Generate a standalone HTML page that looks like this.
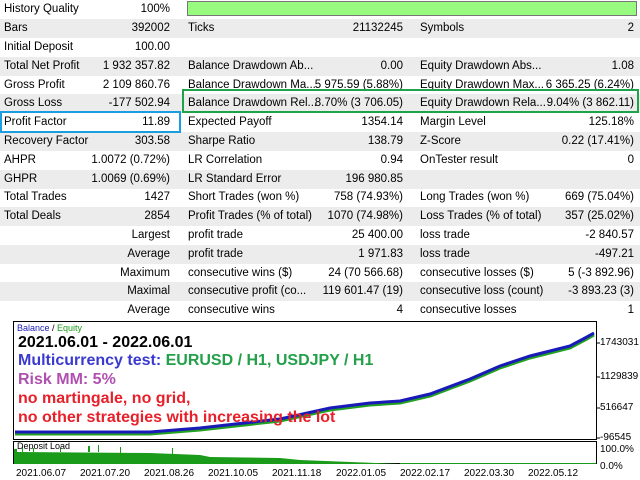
<!DOCTYPE html>
<html><head><style>
body{margin:0;width:640px;height:480px;overflow:hidden;background:#fff;font-family:"Liberation Sans",sans-serif;font-size:11.5px;color:#000;position:relative}
.r{position:absolute;left:0;width:640px;height:19px;line-height:19px}
.g{background:#ececec}
.r span{position:absolute;white-space:nowrap}
.l1{left:4px}.v1{right:470px}.l2{left:188px}.v2{right:237px}.l3{left:420px}.v3{right:6px}
.ax{position:absolute;font-size:10px;white-space:nowrap}
</style></head><body>
<div class="r" style="top:0"><span class="l1">History Quality</span><span class="v1">100%</span></div>
<div style="position:absolute;left:187px;top:1px;width:448px;height:13px;background:#98fb80;border:1px solid #777"></div>
<div class="r g" style="top:19px"><span class="l1">Bars</span><span class="v1">392002</span><span class="l2">Ticks</span><span class="v2">21132245</span><span class="l3">Symbols</span><span class="v3">2</span></div>
<div class="r" style="top:38px"><span class="l1">Initial Deposit</span><span class="v1">100.00</span></div>
<div class="r g" style="top:57px"><span class="l1">Total Net Profit</span><span class="v1">1 932 357.82</span><span class="l2">Balance Drawdown Ab...</span><span class="v2">0.00</span><span class="l3">Equity Drawdown Abs...</span><span class="v3">1.08</span></div>
<div class="r" style="top:76px"><span class="l1">Gross Profit</span><span class="v1">2 109 860.76</span><span class="l2">Balance Drawdown Ma...</span><span class="v2">5 975.59 (5.88%)</span><span class="l3">Equity Drawdown Max...</span><span class="v3">6 365.25 (6.24%)</span></div>
<div class="r g" style="top:94px"><span class="l1">Gross Loss</span><span class="v1">-177 502.94</span><span class="l2">Balance Drawdown Rel...</span><span class="v2">8.70% (3 706.05)</span><span class="l3">Equity Drawdown Rela...</span><span class="v3">9.04% (3 862.11)</span></div>
<div class="r" style="top:113px"><span class="l1">Profit Factor</span><span class="v1">11.89</span><span class="l2">Expected Payoff</span><span class="v2">1354.14</span><span class="l3">Margin Level</span><span class="v3">125.18%</span></div>
<div class="r g" style="top:132px"><span class="l1">Recovery Factor</span><span class="v1">303.58</span><span class="l2">Sharpe Ratio</span><span class="v2">138.79</span><span class="l3">Z-Score</span><span class="v3">0.22 (17.41%)</span></div>
<div class="r" style="top:151px"><span class="l1">AHPR</span><span class="v1">1.0072 (0.72%)</span><span class="l2">LR Correlation</span><span class="v2">0.94</span><span class="l3">OnTester result</span><span class="v3">0</span></div>
<div class="r g" style="top:170px"><span class="l1">GHPR</span><span class="v1">1.0069 (0.69%)</span><span class="l2">LR Standard Error</span><span class="v2">196 980.85</span></div>
<div class="r" style="top:188px"><span class="l1">Total Trades</span><span class="v1">1427</span><span class="l2">Short Trades (won %)</span><span class="v2">758 (74.93%)</span><span class="l3">Long Trades (won %)</span><span class="v3">669 (75.04%)</span></div>
<div class="r g" style="top:207px"><span class="l1">Total Deals</span><span class="v1">2854</span><span class="l2">Profit Trades (% of total)</span><span class="v2">1070 (74.98%)</span><span class="l3">Loss Trades (% of total)</span><span class="v3">357 (25.02%)</span></div>
<div class="r" style="top:226px"><span class="v1">Largest</span><span class="l2">profit trade</span><span class="v2">25 400.00</span><span class="l3">loss trade</span><span class="v3">-2 840.57</span></div>
<div class="r g" style="top:245px"><span class="v1">Average</span><span class="l2">profit trade</span><span class="v2">1 971.83</span><span class="l3">loss trade</span><span class="v3">-497.21</span></div>
<div class="r" style="top:264px"><span class="v1">Maximum</span><span class="l2">consecutive wins ($)</span><span class="v2">24 (70 566.68)</span><span class="l3">consecutive losses ($)</span><span class="v3">5 (-3 892.96)</span></div>
<div class="r g" style="top:282px"><span class="v1">Maximal</span><span class="l2">consecutive profit (co...</span><span class="v2">119 601.47 (19)</span><span class="l3">consecutive loss (count)</span><span class="v3">-3 893.23 (3)</span></div>
<div class="r" style="top:301px"><span class="v1">Average</span><span class="l2">consecutive wins</span><span class="v2">4</span><span class="l3">consecutive losses</span><span class="v3">1</span></div>
<div style="position:absolute;left:0;top:111px;width:177px;height:18px;border:2px solid #1a9ee0"></div>
<div style="position:absolute;left:182px;top:89px;width:453px;height:20px;border:2px solid #1fa34a"></div>

<svg style="position:absolute;left:0;top:318px" width="640" height="162">
<rect x="13.5" y="3.5" width="583" height="118" fill="#fff" stroke="#000"/>
<rect x="13.5" y="123.5" width="583" height="22" fill="#fff" stroke="#000"/>
<g fill="#1a9b1a">
<polygon points="14,146 14,131 17,131 17,134 150,135 200,137 210,139 280,140 300,142 400,146"/>
<polygon points="400,146 596,146 596,145 400,145"/>
<rect x="22" y="129" width="1" height="5"/><rect x="33" y="130" width="1" height="4"/><rect x="60" y="130" width="1" height="4"/><rect x="88" y="128" width="2" height="6"/><rect x="98" y="127" width="1" height="7"/><rect x="120" y="129" width="1" height="6"/><rect x="172" y="130" width="1" height="6"/>
</g>
<polyline fill="none" stroke="#22a022" stroke-width="3" points="15,116 150,116 200,112 280,103 330,92 370,87 400,85 430,78 470,63 500,50 530,40 570,30 585,22 594,17"/>
<polyline fill="none" stroke="#1a1ab8" stroke-width="3" points="15,114 150,114 200,110 280,101 330,90 370,85 400,83 430,76 470,61 500,48 530,38 570,28 585,20 594,15"/>
<g stroke="#000"><line x1="596" y1="25" x2="600" y2="25"/><line x1="596" y1="59" x2="600" y2="59"/><line x1="596" y1="90" x2="600" y2="90"/><line x1="596" y1="120" x2="600" y2="120"/></g>
</svg>
<div class="ax" style="left:600px;top:337px">1743031</div>
<div class="ax" style="left:600px;top:371px">1129839</div>
<div class="ax" style="left:600px;top:402px">516647</div>
<div class="ax" style="left:600px;top:432px">-96545</div>
<div class="ax" style="left:600px;top:444px">100.0%</div>
<div class="ax" style="left:600px;top:461px">0.0%</div>
<div class="ax" style="left:17px;top:441px;font-size:9px">Deposit Load</div>
<div class="ax" style="left:17px;top:323px;font-size:9px"><span style="color:#1a1ab8">Balance</span> / <span style="color:#1a9b1a">Equity</span></div>
<div class="ax" style="left:18px;top:334px;font-size:16px;font-weight:bold">2021.06.01 - 2022.06.01</div>
<div class="ax" style="left:18px;top:352px;font-size:16px;font-weight:bold;color:#3a3ad0">Multicurrency test: <span style="color:#22a04a">EURUSD / H1, USDJPY / H1</span></div>
<div class="ax" style="left:18px;top:371px;font-size:16px;font-weight:bold;color:#b050b0">Risk MM: 5%</div>
<div class="ax" style="left:18px;top:390px;font-size:16px;font-weight:bold;color:#e8202a">no martingale, no grid,</div>
<div class="ax" style="left:18px;top:409px;font-size:16px;font-weight:bold;color:#e8202a">no other strategies with increasing the lot</div>
<div class="ax" style="left:16px;top:468px">2021.06.07</div>
<div class="ax" style="left:80px;top:468px">2021.07.20</div>
<div class="ax" style="left:144px;top:468px">2021.08.26</div>
<div class="ax" style="left:208px;top:468px">2021.10.05</div>
<div class="ax" style="left:272px;top:468px">2021.11.18</div>
<div class="ax" style="left:336px;top:468px">2022.01.05</div>
<div class="ax" style="left:400px;top:468px">2022.02.17</div>
<div class="ax" style="left:464px;top:468px">2022.03.30</div>
<div class="ax" style="left:528px;top:468px">2022.05.12</div>
</body></html>
